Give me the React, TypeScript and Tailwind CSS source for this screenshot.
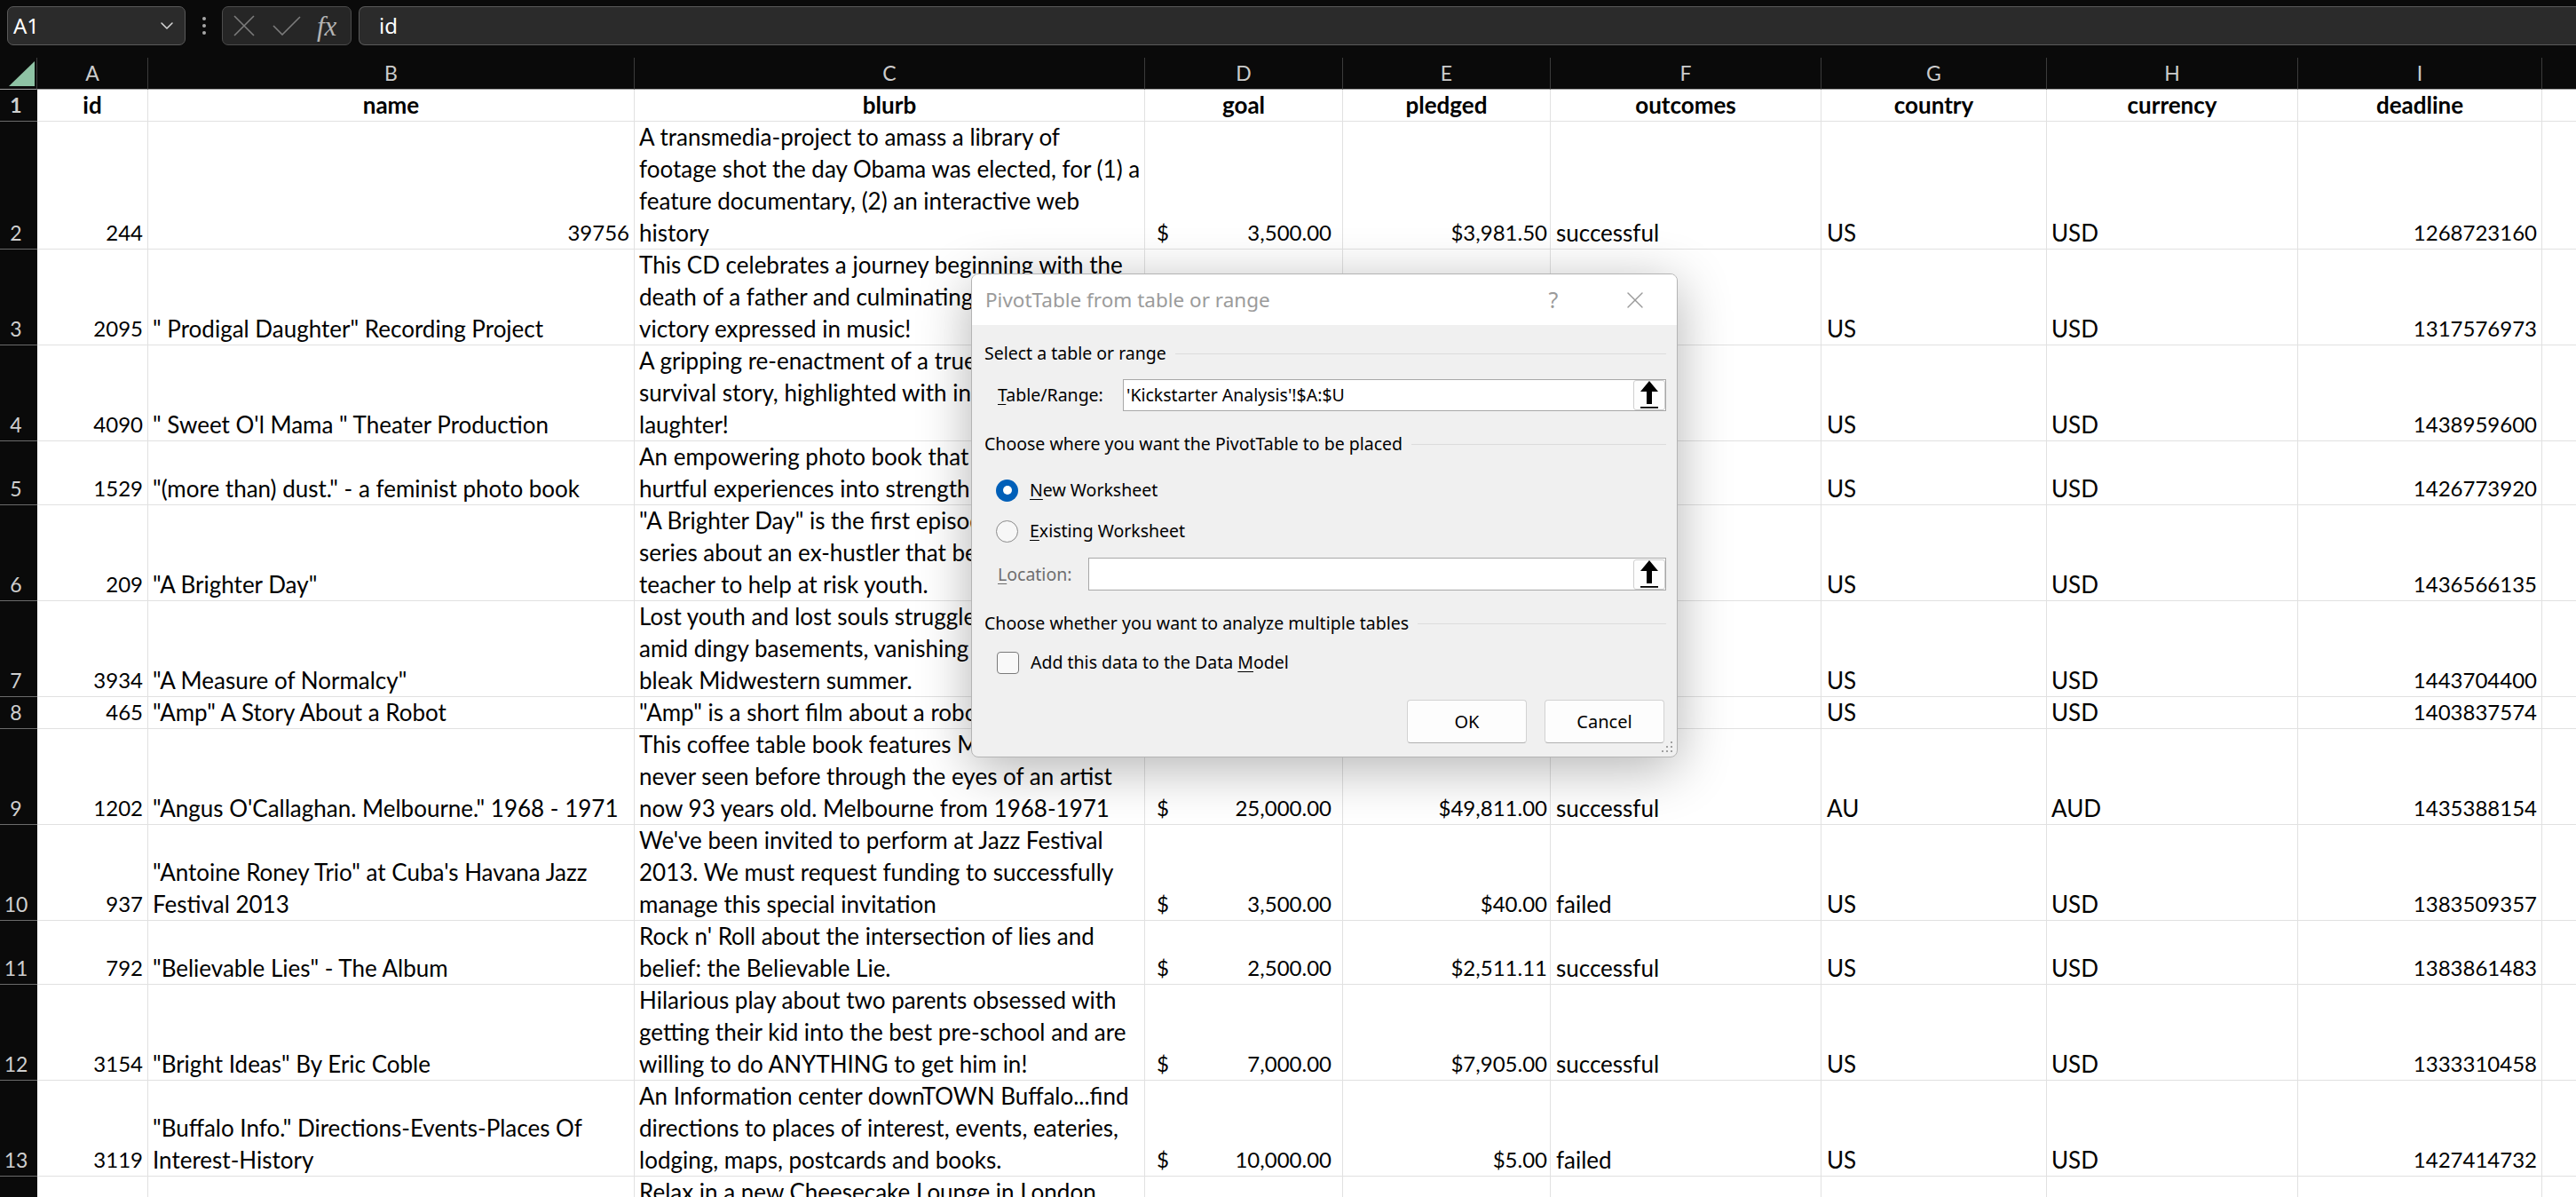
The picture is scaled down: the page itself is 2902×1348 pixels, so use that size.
import { ChevronDown, X } from "lucide-react";

type Row = {
	n: number;
	lines: 1 | 2 | 3 | 4;
	id: string;
	name: string[];
	nameIsNumber?: boolean;
	blurb: string[];
	goal?: string;
	pledged?: string;
	outcome?: string;
	country: string;
	currency: string;
	deadline: string;
};

const rowHeight: Record<number, string> = {
	1: "h-[36px]",
	2: "h-[72px]",
	3: "h-[108px]",
	4: "h-[144px]",
};

const rows: Row[] = [
	{
		n: 2,
		lines: 4,
		id: "244",
		name: ["39756"],
		nameIsNumber: true,
		blurb: [
			"A transmedia-project to amass a library of",
			"footage shot the day Obama was elected, for (1) a",
			"feature documentary, (2) an interactive web",
			"history",
		],
		goal: "3,500.00",
		pledged: "$3,981.50",
		outcome: "successful",
		country: "US",
		currency: "USD",
		deadline: "1268723160",
	},
	{
		n: 3,
		lines: 3,
		id: "2095",
		name: ['" Prodigal Daughter" Recording Project'],
		blurb: [
			"This CD celebrates a journey beginning with the",
			"death of a father and culminating in a great",
			"victory expressed in music!",
		],
		goal: "5,000.00",
		pledged: "$5,220.00",
		outcome: "successful",
		country: "US",
		currency: "USD",
		deadline: "1317576973",
	},
	{
		n: 4,
		lines: 3,
		id: "4090",
		name: ['" Sweet O\'l Mama " Theater Production'],
		blurb: [
			"A gripping re-enactment of a true life",
			"survival story, highlighted with inspiration and",
			"laughter!",
		],
		goal: "3,000.00",
		pledged: "$380.00",
		outcome: "failed",
		country: "US",
		currency: "USD",
		deadline: "1438959600",
	},
	{
		n: 5,
		lines: 2,
		id: "1529",
		name: ['"(more than) dust." - a feminist photo book'],
		blurb: ["An empowering photo book that transforms", "hurtful experiences into strength and beauty."],
		goal: "4,000.00",
		pledged: "$4,380.00",
		outcome: "successful",
		country: "US",
		currency: "USD",
		deadline: "1426773920",
	},
	{
		n: 6,
		lines: 3,
		id: "209",
		name: ['"A Brighter Day"'],
		blurb: [
			'"A Brighter Day" is the first episode of a web',
			"series about an ex-hustler that becomes a",
			"teacher to help at risk youth.",
		],
		goal: "2,500.00",
		pledged: "$2,705.00",
		outcome: "successful",
		country: "US",
		currency: "USD",
		deadline: "1436566135",
	},
	{
		n: 7,
		lines: 3,
		id: "3934",
		name: ['"A Measure of Normalcy"'],
		blurb: [
			"Lost youth and lost souls struggle to connect",
			"amid dingy basements, vanishing friends and a",
			"bleak Midwestern summer.",
		],
		goal: "6,000.00",
		pledged: "$6,070.00",
		outcome: "successful",
		country: "US",
		currency: "USD",
		deadline: "1443704400",
	},
	{
		n: 8,
		lines: 1,
		id: "465",
		name: ['"Amp" A Story About a Robot'],
		blurb: ['"Amp" is a short film about a robot who must'],
		goal: "1,500.00",
		pledged: "$1,510.00",
		outcome: "successful",
		country: "US",
		currency: "USD",
		deadline: "1403837574",
	},
	{
		n: 9,
		lines: 3,
		id: "1202",
		name: ['"Angus O\'Callaghan. Melbourne." 1968 - 1971'],
		blurb: [
			"This coffee table book features Melbourne as",
			"never seen before through the eyes of an artist",
			"now 93 years old. Melbourne from 1968-1971",
		],
		goal: "25,000.00",
		pledged: "$49,811.00",
		outcome: "successful",
		country: "AU",
		currency: "AUD",
		deadline: "1435388154",
	},
	{
		n: 10,
		lines: 3,
		id: "937",
		name: ['"Antoine Roney Trio" at Cuba\'s Havana Jazz', "Festival 2013"],
		blurb: [
			"We've been invited to perform at Jazz Festival",
			"2013. We must request funding to successfully",
			"manage this special invitation",
		],
		goal: "3,500.00",
		pledged: "$40.00",
		outcome: "failed",
		country: "US",
		currency: "USD",
		deadline: "1383509357",
	},
	{
		n: 11,
		lines: 2,
		id: "792",
		name: ['"Believable Lies" - The Album'],
		blurb: ["Rock n' Roll about the intersection of lies and", "belief: the Believable Lie."],
		goal: "2,500.00",
		pledged: "$2,511.11",
		outcome: "successful",
		country: "US",
		currency: "USD",
		deadline: "1383861483",
	},
	{
		n: 12,
		lines: 3,
		id: "3154",
		name: ['"Bright Ideas" By Eric Coble'],
		blurb: [
			"Hilarious play about two parents obsessed with",
			"getting their kid into the best pre-school and are",
			"willing to do ANYTHING to get him in!",
		],
		goal: "7,000.00",
		pledged: "$7,905.00",
		outcome: "successful",
		country: "US",
		currency: "USD",
		deadline: "1333310458",
	},
	{
		n: 13,
		lines: 3,
		id: "3119",
		name: ['"Buffalo Info." Directions-Events-Places Of', "Interest-History"],
		blurb: [
			"An Information center downTOWN Buffalo...find",
			"directions to places of interest, events, eateries,",
			"lodging, maps, postcards and books.",
		],
		goal: "10,000.00",
		pledged: "$5.00",
		outcome: "failed",
		country: "US",
		currency: "USD",
		deadline: "1427414732",
	},
	{
		n: 14,
		lines: 3,
		id: "2437",
		name: ['"Cheesecake Lounge" London'],
		blurb: [
			"Relax in a new Cheesecake Lounge in London",
			"with coffee, cakes and good company for all",
			"the family.",
		],
		goal: "8,000.00",
		pledged: "$1,250.00",
		outcome: "failed",
		country: "GB",
		currency: "GBP",
		deadline: "1419379200",
	},
];

// numbers render at 24px, words at 26px: keeps both close to the Calibri widths
const cell =
	"flex h-full shrink-0 flex-col justify-end overflow-hidden whitespace-nowrap border-r border-b border-[#e1e1e1] leading-[36px]";
const num = "text-[24px]";
const txt = "text-[26px]";

function Lines({ lines }: { lines: string[] }) {
	return (
		<>
			{lines.map((l, i) => (
				<span key={i}>{l}</span>
			))}
		</>
	);
}

function TopBar() {
	return (
		<div className="flex h-[65px] items-start bg-[#0a0a0a] pt-[7px] pl-[8px] font-['Noto_Sans',sans-serif]">
			<div className="flex h-[44px] w-[201px] items-center justify-between rounded-[7px] border border-[#5a5a5a] bg-[#2b2b2b] pr-[8px] pl-[6px]">
				<span className="text-[24px] text-white">A1</span>
				<ChevronDown size={24} strokeWidth={1.5} className="text-[#d8d8d8]" />
			</div>
			<div className="flex h-[44px] w-[41px] flex-col items-center justify-center gap-[4px]">
				<span className="h-[4px] w-[4px] rounded-full bg-[#a8a8a8]" />
				<span className="h-[4px] w-[4px] rounded-full bg-[#a8a8a8]" />
				<span className="h-[4px] w-[4px] rounded-full bg-[#a8a8a8]" />
			</div>
			<div className="flex h-[44px] w-[146px] items-center rounded-[7px] border border-[#4c4c4c] bg-[#262626]">
				<svg className="ml-[12px]" width="24" height="24" viewBox="0 0 24 24">
					<path d="M1 1 23 23M23 1 1 23" stroke="#7c7c7c" strokeWidth="1.6" fill="none" />
				</svg>
				<svg className="ml-[20px]" width="32" height="22" viewBox="0 0 32 22">
					<path d="M1 11 11 21 31 1" stroke="#7c7c7c" strokeWidth="1.6" fill="none" />
				</svg>
				<span className="ml-[18px] font-['Liberation_Serif',serif] text-[31px] leading-none text-[#b4b4b4] italic">
					fx
				</span>
			</div>
			<div className="ml-[8px] flex h-[44px] flex-1 items-center rounded-l-[7px] border border-r-0 border-[#5a5a5a] bg-[#2b2b2b] pl-[22px]">
				<span className="text-[24px] text-white">id</span>
			</div>
		</div>
	);
}

const colW = [
	"w-[125px]",
	"w-[548px]",
	"w-[575px]",
	"w-[223px]",
	"w-[234px]",
	"w-[305px]",
	"w-[254px]",
	"w-[283px]",
	"w-[275px]",
	"w-[200px]",
];
const letters = ["A", "B", "C", "D", "E", "F", "G", "H", "I", "J"];
const headers = ["id", "name", "blurb", "goal", "pledged", "outcomes", "country", "currency", "deadline", ""];

function ColumnHeaders() {
	return (
		<div className="flex h-[36px] bg-[#0a0a0a] text-[23px] text-[#cccccc]">
			<div className="relative h-full w-[42px] shrink-0 border-r border-b border-r-[#3b3b3b] border-b-[#a0a0a0]">
				<svg className="absolute top-0 left-0" width="42" height="36" viewBox="0 0 42 36">
					<polygon points="10,32 39,32 39,4" fill="#8ec3a4" />
				</svg>
			</div>
			{letters.map((l, i) => (
				<div
					key={l}
					className={`${colW[i]} flex h-full shrink-0 items-center justify-center border-r border-b border-r-[#3b3b3b] border-b-[#a0a0a0]`}
				>
					{l}
				</div>
			))}
		</div>
	);
}

function RowNum({ n }: { n: number }) {
	return (
		<div className="flex h-full w-[42px] shrink-0 flex-col justify-end border-b border-[#6b6b6b] bg-[#0a0a0a] pr-[6px] text-center text-[23px] leading-[36px] text-[#cfcfcf]">
			{n}
		</div>
	);
}

function DataRow({ r }: { r: Row }) {
	return (
		<div className={`flex ${rowHeight[r.lines]}`}>
			<RowNum n={r.n} />
			<div className={`${cell} ${colW[0]} ${num} items-end pr-[5px]`}>{r.id}</div>
			<div className={`${cell} ${colW[1]} ${r.nameIsNumber ? `${num} items-end pr-[5px]` : `${txt} pl-[5px]`}`}>
				<Lines lines={r.name} />
			</div>
			<div className={`${cell} ${colW[2]} ${txt} pl-[5px]`}>
				<Lines lines={r.blurb} />
			</div>
			<div className={`${cell} ${colW[3]} ${num}`}>
				{r.goal && (
					<div className="flex justify-between pr-[12px] pl-[13px]">
						<span>$</span>
						<span>{r.goal}</span>
					</div>
				)}
			</div>
			<div className={`${cell} ${colW[4]} ${num} items-end pr-[3px]`}>{r.pledged}</div>
			<div className={`${cell} ${colW[5]} ${txt} pl-[6px]`}>{r.outcome}</div>
			<div className={`${cell} ${colW[6]} ${txt} pl-[6px]`}>{r.country}</div>
			<div className={`${cell} ${colW[7]} ${txt} pl-[5px]`}>{r.currency}</div>
			<div className={`${cell} ${colW[8]} ${num} items-end pr-[5px]`}>{r.deadline}</div>
			<div className={`${cell} ${colW[9]}`} />
		</div>
	);
}

function HeaderRow() {
	return (
		<div className="flex h-[36px] font-bold">
			<RowNum n={1} />
			{headers.map((h, i) => (
				<div key={i} className={`${cell} ${colW[i]} ${txt} items-center`}>
					{h}
				</div>
			))}
		</div>
	);
}

function UpArrow() {
	return (
		<svg width="22" height="32" viewBox="0 0 22 32">
			<polygon points="11,0 21,12 14,12 14,26 8,26 8,12 1,12" fill="#000" />
			<rect x="1" y="29" width="20" height="1.8" fill="#000" />
		</svg>
	);
}

function RefInput({ value, className }: { value?: string; className: string }) {
	return (
		<div className={`${className} flex items-center border border-[#a8a8a8] bg-white pl-[3px]`}>
			<span className="flex-1 text-[19.5px] text-black">{value}</span>
			<div className="flex h-[34px] w-[36px] items-center justify-center rounded-[3px] border border-[#cfcfcf] bg-[#fdfdfd]">
				<UpArrow />
			</div>
		</div>
	);
}

function SectionTitle({ text, className }: { text: string; className: string }) {
	return (
		<div className={`${className} flex h-[40px] items-center`}>
			<span>{text}</span>
			<div className="ml-[10px] h-px flex-1 bg-[#dcdcdc]" />
		</div>
	);
}

function PivotDialog() {
	return (
		<div className="absolute top-[308px] left-[1094px] flex h-[545px] w-[796px] flex-col overflow-hidden rounded-[8px] border border-[#b4b4b4] bg-[#f0f0f0] font-['Noto_Sans',sans-serif] text-[19.5px] text-black shadow-[0_12px_60px_rgba(0,0,0,0.3)]">
			<div className="flex h-[57px] shrink-0 items-center justify-between bg-white pr-[27px] pl-[15px]">
				<span className="text-[22.5px] text-[#9b9b9b]">PivotTable from table or range</span>
				<div className="flex items-center gap-[52px] text-[#9a9a9a]">
					<span className="flex w-[40px] justify-center text-[25px]">?</span>
					<span className="flex w-[40px] justify-center">
						<X size={32} strokeWidth={1} />
					</span>
				</div>
			</div>
			<div className="flex flex-1 flex-col pr-[12px] pl-[14px]">
				<SectionTitle className="mt-[12px]" text="Select a table or range" />
				<div className="mt-[9px] flex h-[36px] items-center">
					<span className="w-[156px] shrink-0 pl-[15px]">
						<span className="underline underline-offset-[3px]">T</span>able/Range:
					</span>
					<RefInput className="h-[36px] flex-1" value="'Kickstarter Analysis'!$A:$U" />
				</div>
				<SectionTitle className="mt-[17px]" text="Choose where you want the PivotTable to be placed" />
				<div className="mt-[12px] flex h-[40px] items-center pl-[13px]">
					<span className="flex h-[25px] w-[25px] items-center justify-center rounded-full bg-[#005fb8]">
						<span className="h-[10px] w-[10px] rounded-full bg-white" />
					</span>
					<span className="ml-[13px]">
						<span className="underline underline-offset-[3px]">N</span>ew Worksheet
					</span>
				</div>
				<div className="mt-[6px] flex h-[40px] items-center pl-[13px]">
					<span className="h-[25px] w-[25px] rounded-full border-[1.5px] border-[#8a8a8a] bg-[#f7f7f7]" />
					<span className="ml-[13px]">
						<span className="underline underline-offset-[3px]">E</span>xisting Worksheet
					</span>
				</div>
				<div className="mt-[10px] flex h-[37px] items-center">
					<span className="w-[117px] shrink-0 pl-[15px] text-[#6e6e6e]">
						<span className="underline underline-offset-[3px]">L</span>ocation:
					</span>
					<RefInput className="h-[37px] flex-1" />
				</div>
				<SectionTitle className="mt-[17px]" text="Choose whether you want to analyze multiple tables" />
				<div className="mt-[4px] flex h-[40px] items-center pl-[14px]">
					<span className="h-[25px] w-[25px] rounded-[4px] border-[1.5px] border-[#7a7a7a] bg-[#f9f9f9]" />
					<span className="ml-[13px]">
						Add this data to the Data <span className="underline underline-offset-[3px]">M</span>odel
					</span>
				</div>
				<div className="mt-[22px] flex justify-end gap-[20px] pr-[2px]">
					<button className="h-[49px] w-[135px] rounded-[4px] border border-[#d2d2d2] border-b-[#b0b0b0] bg-[#fdfdfd] text-[20px]">
						OK
					</button>
					<button className="h-[49px] w-[135px] rounded-[4px] border border-[#d2d2d2] border-b-[#b0b0b0] bg-[#fdfdfd] text-[20px]">
						Cancel
					</button>
				</div>
			</div>
			<svg className="absolute right-[4px] bottom-[4px]" width="14" height="14" viewBox="0 0 14 14">
				<rect x="11" y="1" width="2" height="2" fill="#a0a0a0" />
				<rect x="11" y="6" width="2" height="2" fill="#a0a0a0" />
				<rect x="6" y="6" width="2" height="2" fill="#a0a0a0" />
				<rect x="11" y="11" width="2" height="2" fill="#a0a0a0" />
				<rect x="6" y="11" width="2" height="2" fill="#a0a0a0" />
				<rect x="1" y="11" width="2" height="2" fill="#a0a0a0" />
			</svg>
		</div>
	);
}

export default function App() {
	return (
		<div className="relative h-[1348px] w-[2902px] overflow-hidden bg-white">
			<TopBar />
			<div className="font-['Lato',sans-serif] text-[24px] text-black">
				<ColumnHeaders />
				<HeaderRow />
				{rows.map((r) => (
					<DataRow key={r.n} r={r} />
				))}
			</div>
			<PivotDialog />
		</div>
	);
}
